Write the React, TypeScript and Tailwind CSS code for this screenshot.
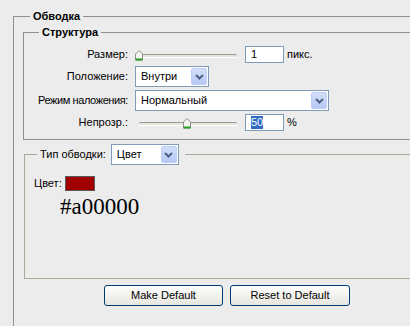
import React from "react";

const ui = "font-['Liberation_Sans',sans-serif] text-[11px] leading-[13px] text-black";

function Chevron() {
  return (
    <svg width="9" height="6" viewBox="0 0 9 6">
      <path d="M1 1 L4.5 4.5 L8 1" fill="none" stroke="#4d6185" strokeWidth="2" />
    </svg>
  );
}

function Select({ value, width }: { value: string; width: string }) {
  return (
    <div className={`flex h-[21px] ${width} items-stretch border border-[#7f9db9] bg-white p-px`}>
      <span className="flex flex-1 items-center pl-[4px]">{value}</span>
      <span className="flex w-[16px] items-center justify-center rounded-[2px] border border-[#bccef7] bg-gradient-to-b from-[#d2def9] to-[#b7c9f4]">
        <Chevron />
      </span>
    </div>
  );
}

function Thumb() {
  return (
    <svg width="10" height="12" viewBox="0 0 10 12" className="shrink-0">
      <path d="M1.5 11 L1.5 5 L5 1.5 L8.5 5 L8.5 11 Z" fill="#f4f4f0" stroke="#8d8d86" />
      <path d="M1.5 10.5 L8.5 10.5" stroke="#21a121" strokeWidth="2" />
    </svg>
  );
}

function Slider({ at }: { at: number }) {
  return (
    <div className="flex w-[102px] items-center">
      <div className="relative h-[12px] w-full">
        <div className="absolute left-[4px] right-0 top-[5px] h-[3px] rounded-full border-t border-[#9d9b93] bg-[#e4e3dc] shadow-[0_1px_0_#fff]" />
        <div className="absolute top-0" style={{ left: at }}>
          <Thumb />
        </div>
      </div>
    </div>
  );
}

function Field({ children }: { children: React.ReactNode }) {
  return (
    <div className="flex h-[17px] w-[39px] items-center border border-[#7f9db9] bg-white pl-[5px]">
      {children}
    </div>
  );
}

function Row({ label, tight, children }: { label: string; tight?: boolean; children: React.ReactNode }) {
  return (
    <div className="flex items-center">
      <span className={`w-[105px] shrink-0 pr-[1px] text-right ${tight ? "tracking-[-0.4px]" : ""}`}>{label}</span>
      <div className="ml-[6px] flex items-center">{children}</div>
    </div>
  );
}

export default function App() {
  return (
    <div className={`h-[326px] w-[410px] overflow-hidden bg-[#ececec] pl-[13px] pt-[10px] ${ui}`}>
      <fieldset className="w-[440px] border-l border-t border-[#8f8f8f] pb-[40px]">
        <legend className="ml-[16px] px-[3px] font-bold">Обводка</legend>

        <fieldset className="ml-[9px] mt-[3px] border-b border-l border-t border-[#8f8f8f] pb-[8px]">
          <legend className="ml-[15px] px-[3px] font-bold">Структура</legend>
          <div className="mt-[7px] flex flex-col gap-[3px]">
            <Row label="Размер:">
              <Slider at={-1} />
              <div className="ml-[8px]">
                <Field>1</Field>
              </div>
              <span className="ml-[3px]">пикс.</span>
            </Row>
            <Row label="Положение:">
              <Select value="Внутри" width="w-[74px]" />
            </Row>
            <Row label="Режим наложения:" tight>
              <Select value="Нормальный" width="w-[194px]" />
            </Row>
            <Row label="Непрозр.:">
              <Slider at={47} />
              <div className="ml-[8px]">
                <Field>
                  <span className="bg-[#316ac5] text-white">50</span>
                </Field>
              </div>
              <span className="ml-[3px]">%</span>
            </Row>
          </div>
        </fieldset>

        <fieldset className="ml-[10px] mt-[4px] border-b border-l border-t border-[#aca899]">
          <legend className="ml-[12px] pl-[3px] pr-[6px]">
            <div className="flex items-center">
              <span>Тип обводки:</span>
              <div className="ml-[5px]">
                <Select value="Цвет" width="w-[68px]" />
              </div>
            </div>
          </legend>
          <div className="h-[113px] pl-[9px] pt-[11px]">
            <div className="flex items-center">
              <span>Цвет:</span>
              <span className="ml-[3px] h-[15px] w-[30px] border border-[#5a5a5a] bg-[#a00000]" />
            </div>
            <div className="ml-[26px] mt-[5px] font-['Liberation_Serif',serif] text-[23px] leading-[22px]">
              #a00000
            </div>
          </div>
        </fieldset>

        <div className="ml-[90px] mt-[6px] flex gap-[7px]">
          <button className="h-[21px] w-[119px] rounded-[3px] border border-[#003c74] bg-gradient-to-b from-white to-[#e6e5de]">
            Make Default
          </button>
          <button className="h-[21px] w-[120px] rounded-[3px] border border-[#003c74] bg-gradient-to-b from-white to-[#e6e5de]">
            Reset to Default
          </button>
        </div>
      </fieldset>
    </div>
  );
}
